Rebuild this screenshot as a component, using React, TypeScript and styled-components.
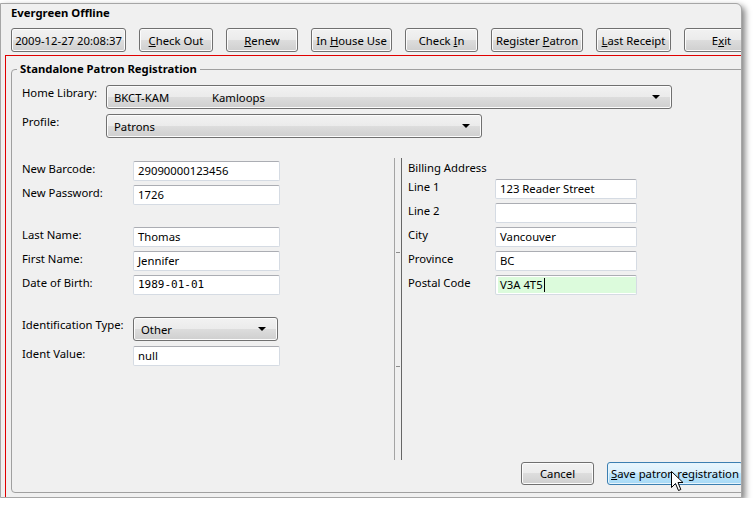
import React from "react";
import styled, { createGlobalStyle } from "styled-components";

const GlobalStyle = createGlobalStyle`
  html, body {
    margin: 0;
    padding: 0;
    background: #ffffff;
  }
  body {
    font-family: "Noto Sans", "Open Sans", sans-serif;
    font-size: 11.3px;
    color: #000;
  }
`;

const Window = styled.div`
  position: relative;
  box-sizing: border-box;
  width: 742px;
  height: 495px;
  margin-top: 3px;
  background: #f0f0f0;
  border: 1px solid #a6a6a6;
  border-radius: 0 6px 0 0;
  box-shadow: 3px 3px 6px rgba(0, 0, 0, 0.5);
  overflow: hidden;
  display: flex;
  flex-direction: column;
`;

const TitleBar = styled.div`
  height: 18px;
  line-height: 17px;
  padding-left: 10px;
  font-weight: bold;
`;

const Toolbar = styled.div`
  display: flex;
  gap: 13px;
  height: 24px;
  margin-top: 6px;
  padding-left: 10px;
`;

const Button = styled.button<{ $width: number; $height?: number; $hot?: boolean }>`
  box-sizing: border-box;
  flex: none;
  width: ${(p) => p.$width}px;
  height: ${(p) => p.$height ?? 24}px;
  padding: 0;
  font: inherit;
  color: #000;
  border: 1px solid ${(p) => (p.$hot ? "#3c7fb1" : "#707070")};
  border-radius: 3px;
  box-shadow: inset 0 0 0 1px ${(p) => (p.$hot ? "#e6f4fc" : "#fcfcfc")};
  background: ${(p) =>
    p.$hot
      ? "linear-gradient(#eaf6fd 0%, #d9f0fc 50%, #bee6fd 50%, #a7d9f5 100%)"
      : "linear-gradient(#f2f2f2 0%, #ebebeb 50%, #dddddd 50%, #cfcfcf 100%)"};
  text-align: center;
  white-space: nowrap;
  overflow: hidden;
`;

const Key = styled.span`
  text-decoration: underline;
  text-underline-offset: 1px;
`;

const Content = styled.div`
  flex: 1;
  margin: 3px 0 0 4px;
  border-top: 1px solid #e00000;
  border-left: 1px solid #e00000;
  display: flex;
  flex-direction: column;
`;

const GroupBox = styled.fieldset`
  box-sizing: border-box;
  width: 745px;
  min-width: 0;
  margin: 5px 0 0 5px;
  padding: 0;
  border: 1px solid #a0a0a0;
  border-radius: 4px;
`;

const Legend = styled.legend`
  margin-left: 5px;
  padding: 0 3px;
  line-height: 16px;
  font-weight: bold;
`;

const Body = styled.div`
  padding: 8px 12px 7px 10px;
  display: flex;
  flex-direction: column;
`;

const Row = styled.div<{ $top?: number; $height?: number }>`
  display: flex;
  align-items: flex-start;
  height: ${(p) => p.$height ?? 20}px;
  margin-top: ${(p) => p.$top ?? 0}px;
`;

const Label = styled.div<{ $width: number }>`
  flex: none;
  width: ${(p) => p.$width}px;
  padding-top: 0;
  line-height: 16px;
  white-space: nowrap;
`;

const Combo = styled.div<{ $width: number }>`
  box-sizing: border-box;
  width: ${(p) => p.$width}px;
  height: 24px;
  display: flex;
  align-items: center;
  padding: 0 11px 0 7px;
  border: 1px solid #707070;
  border-radius: 3px;
  box-shadow: inset 0 0 0 1px #fcfcfc;
  background: linear-gradient(#f2f2f2 0%, #ebebeb 50%, #dddddd 50%, #cfcfcf 100%);
  white-space: nowrap;
`;

const ComboCell = styled.span<{ $width?: number }>`
  display: inline-block;
  width: ${(p) => (p.$width ? `${p.$width}px` : "auto")};
`;

const Arrow = styled.span`
  margin-left: auto;
  width: 0;
  height: 0;
  border-left: 4px solid transparent;
  border-right: 4px solid transparent;
  border-top: 4px solid #000;
`;

const TextBox = styled.div<{ $width: number; $mono?: boolean; $active?: boolean }>`
  box-sizing: border-box;
  width: ${(p) => p.$width}px;
  height: 20px;
  padding: 0 4px;
  line-height: 18px;
  border: 1px solid #d5dbe3;
  border-top-color: #abadb3;
  border-radius: 2px;
  background: ${(p) => (p.$active ? "#dcfbdc" : "#ffffff")};
  box-shadow: ${(p) => (p.$active ? "inset 1px 0 0 1px #fff" : "none")};
  font-family: ${(p) => (p.$mono ? '"DejaVu Sans Mono", monospace' : "inherit")};
  font-size: ${(p) => (p.$mono ? "11px" : "inherit")};
  white-space: nowrap;
  overflow: hidden;
`;

const Caret = styled.span`
  display: inline-block;
  width: 1px;
  height: 14px;
  margin-left: 1px;
  vertical-align: -3px;
  background: #000;
`;

const Columns = styled.div`
  display: flex;
  height: 302px;
  margin-top: 20px;
`;

const LeftPane = styled.div`
  width: 372px;
  padding-top: 3px;
  display: flex;
  flex-direction: column;
`;

const Splitter = styled.div`
  box-sizing: border-box;
  width: 8px;
  border-left: 1px solid #a4a4a4;
  border-right: 1px solid #666666;
  display: flex;
  flex-direction: column;
`;

const Grip = styled.div<{ $top: number }>`
  width: 4px;
  height: 1px;
  margin: ${(p) => p.$top}px 0 0 1px;
  background: #8c8c8c;
`;

const RightPane = styled.div`
  flex: 1;
  padding: 2px 0 0 6px;
  display: flex;
  flex-direction: column;
`;

const SectionTitle = styled.div`
  line-height: 16px;
  margin-bottom: 3px;
`;

const ButtonRow = styled.div`
  display: flex;
  justify-content: flex-end;
  gap: 13px;
  margin-top: 2px;
`;

const Cursor = styled.svg`
  position: absolute;
  left: 670px;
  top: 467px;
`;

const leftFields = [
  { label: "New Barcode:", value: "29090000123456", top: 0 },
  { label: "New Password:", value: "1726", top: 4 },
  { label: "Last Name:", value: "Thomas", top: 22 },
  { label: "First Name:", value: "Jennifer", top: 4 },
  { label: "Date of Birth:", value: "1989-01-01", top: 4, mono: true },
];

const addressFields = [
  { label: "Line 1", value: "123 Reader Street" },
  { label: "Line 2", value: "" },
  { label: "City", value: "Vancouver" },
  { label: "Province", value: "BC" },
];

export default function App() {
  return (
    <>
      <GlobalStyle />
      <Window>
        <TitleBar>Evergreen Offline</TitleBar>
        <Toolbar>
          <Button $width={115}>2009-12-27 20:08:37</Button>
          <Button $width={74}>
            <Key>C</Key>heck Out
          </Button>
          <Button $width={72}>
            <Key>R</Key>enew
          </Button>
          <Button $width={81}>
            In <Key>H</Key>ouse Use
          </Button>
          <Button $width={73}>
            Check <Key>I</Key>n
          </Button>
          <Button $width={92}>
            Register <Key>P</Key>atron
          </Button>
          <Button $width={75}>
            <Key>L</Key>ast Receipt
          </Button>
          <Button $width={75}>
            E<Key>x</Key>it
          </Button>
        </Toolbar>
        <Content>
          <GroupBox>
            <Legend>Standalone Patron Registration</Legend>
            <Body>
              <Row $height={24}>
                <Label $width={84}>Home Library:</Label>
                <Combo $width={566}>
                  <ComboCell $width={98}>BKCT-KAM</ComboCell>
                  <ComboCell>Kamloops</ComboCell>
                  <Arrow />
                </Combo>
              </Row>
              <Row $height={24} $top={5}>
                <Label $width={84}>Profile:</Label>
                <Combo $width={376}>
                  <ComboCell>Patrons</ComboCell>
                  <Arrow />
                </Combo>
              </Row>
              <Columns>
                <LeftPane>
                  {leftFields.map((f) => (
                    <Row key={f.label} $top={f.top}>
                      <Label $width={111}>{f.label}</Label>
                      <TextBox $width={147} $mono={f.mono}>
                        {f.value}
                      </TextBox>
                    </Row>
                  ))}
                  <Row $height={24} $top={22}>
                    <Label $width={111}>Identification Type:</Label>
                    <Combo $width={145}>
                      <ComboCell>Other</ComboCell>
                      <Arrow />
                    </Combo>
                  </Row>
                  <Row $top={5}>
                    <Label $width={111}>Ident Value:</Label>
                    <TextBox $width={147}>null</TextBox>
                  </Row>
                </LeftPane>
                <Splitter>
                  <Grip $top={94} />
                  <Grip $top={113} />
                </Splitter>
                <RightPane>
                  <SectionTitle>Billing Address</SectionTitle>
                  {addressFields.map((f, i) => (
                    <Row key={f.label} $top={i === 0 ? 0 : 4}>
                      <Label $width={87}>{f.label}</Label>
                      <TextBox $width={142}>{f.value}</TextBox>
                    </Row>
                  ))}
                  <Row $top={4}>
                    <Label $width={87}>Postal Code</Label>
                    <TextBox $width={142} $active>
                      V3A 4T5
                      <Caret />
                    </TextBox>
                  </Row>
                </RightPane>
              </Columns>
              <ButtonRow>
                <Button $width={73} $height={23}>
                  Cancel
                </Button>
                <Button $width={136} $height={23} $hot>
                  <Key>S</Key>ave patron registration
                </Button>
              </ButtonRow>
            </Body>
          </GroupBox>
        </Content>
        <Cursor width="13" height="21" viewBox="0 0 13 21">
          <path
            d="M0.5 0.5 L0.5 16.5 L4.5 12.5 L7.5 19.5 L9.8 18.5 L7 11.5 L12 11.5 Z"
            fill="#fff"
            stroke="#000"
            strokeWidth="1"
            strokeLinejoin="miter"
          />
        </Cursor>
      </Window>
    </>
  );
}
